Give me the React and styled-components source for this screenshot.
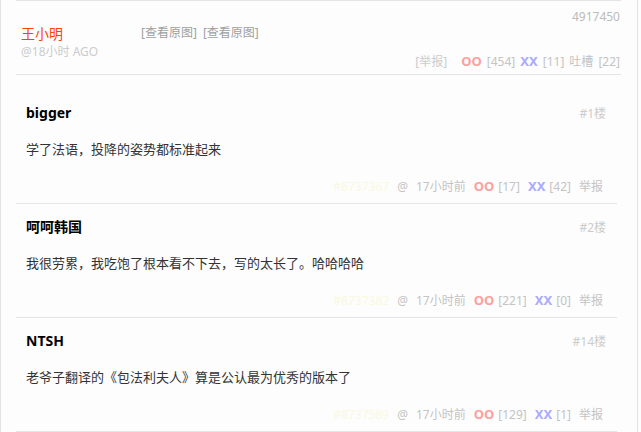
import React from "react";
import styled, { createGlobalStyle } from "styled-components";

const GlobalStyle = createGlobalStyle`
  *, *::before, *::after {
    box-sizing: border-box;
  }
  body {
    margin: 0;
    background: #fdfdfd;
    font-family: "Noto Sans", "Noto Sans CJK SC", sans-serif;
  }
`;

const Page = styled.div`
  width: 638px;
  height: 432px;
  overflow: hidden;
  border-left: 1px solid #e3e3e3;
  border-right: 1px solid #e3e3e3;
  background: #fdfdfd;
`;

const Post = styled.div`
  width: 605px;
  margin-left: 15px;
  padding: 8px 1px 4px 5px;
  border-top: 1px solid #e5e5e5;
  border-bottom: 1px solid #e5e5e5;
  display: grid;
  grid-template-columns: 120px 1fr;
`;

const PostId = styled.div`
  grid-column: 1 / 3;
  text-align: right;
  font-size: 12px;
  line-height: 16px;
  color: #bbb;
`;

const Author = styled.div`
  display: flex;
  flex-direction: column;
`;

const AuthorName = styled.span`
  font-size: 14px;
  line-height: 18px;
  color: #ff4400;
`;

const AuthorTime = styled.span`
  margin-top: 2px;
  font-size: 12px;
  line-height: 14px;
  color: #ccc;
`;

const PostSide = styled.div`
  display: flex;
  flex-direction: column;
`;

const Links = styled.div`
  font-size: 12px;
  line-height: 16px;
  color: #a0a0a0;
  display: flex;
  gap: 6px;
`;

const VoteBar = styled.div`
  margin-top: 12px;
  display: flex;
  justify-content: flex-end;
  align-items: baseline;
  gap: 5px;
  font-size: 12px;
  line-height: 16px;
  color: #c4c4c4;
`;

const Report = styled.span`
  margin-right: 9px;
  color: #ccc;
`;

const Vote = styled.span`
  font-weight: 700;
  font-size: 13px;
  color: ${({ $kind }) => ($kind === "xx" ? "#aaaaff" : "#ff9f9f")};
`;

const Comment = styled.div`
  width: 601px;
  margin-left: 15px;
  padding: 13px 11px 8px 10px;
  border-bottom: 1px solid #e5e5e5;
  &:first-child {
    margin-top: 15px;
  }
`;

const CommentHead = styled.div`
  display: flex;
  justify-content: space-between;
  align-items: baseline;
`;

const Name = styled.span`
  font-size: 14px;
  font-weight: 700;
  line-height: 19px;
  color: #000;
`;

const Floor = styled.span`
  font-size: 12px;
  color: #ccc;
`;

const Text = styled.p`
  margin: 17px 0 0;
  font-size: 13px;
  line-height: 21px;
  color: #333;
`;

const Footer = styled.div`
  margin: 18px 3px 0 0;
  display: flex;
  justify-content: flex-end;
  align-items: baseline;
  gap: 8px;
  font-size: 12px;
  line-height: 16px;
  color: #c4c4c4;
`;

const FooterId = styled.span`
  color: #f9f9e0;
`;

const Pair = styled.span`
  display: inline-flex;
  align-items: baseline;
  gap: 4px;
`;

const comments = [
  { name: "bigger", floor: "#1楼", text: "学了法语，投降的姿势都标准起来", id: "#8737367", oo: 17, xx: 42 },
  { name: "呵呵韩国", floor: "#2楼", text: "我很劳累，我吃饱了根本看不下去，写的太长了。哈哈哈哈", id: "#8737382", oo: 221, xx: 0 },
  { name: "NTSH", floor: "#14楼", text: "老爷子翻译的《包法利夫人》算是公认最为优秀的版本了", id: "#8737589", oo: 129, xx: 1 },
];

export default function App() {
  return (
    <>
      <GlobalStyle />
      <Page>
        <Post>
          <PostId>4917450</PostId>
          <Author>
            <AuthorName>王小明</AuthorName>
            <AuthorTime>@18小时 AGO</AuthorTime>
          </Author>
          <PostSide>
            <Links>
              <span>[查看原图]</span>
              <span>[查看原图]</span>
            </Links>
            <VoteBar>
              <Report>[举报]</Report>
              <Vote>OO</Vote>
              <span>[454]</span>
              <Vote $kind="xx">XX</Vote>
              <span>[11]</span>
              <span>吐槽</span>
              <span>[22]</span>
            </VoteBar>
          </PostSide>
        </Post>
        <div>
          {comments.map((c) => (
            <Comment key={c.id}>
              <CommentHead>
                <Name>{c.name}</Name>
                <Floor>{c.floor}</Floor>
              </CommentHead>
              <Text>{c.text}</Text>
              <Footer>
                <FooterId>{c.id}</FooterId>
                <span>@</span>
                <span>17小时前</span>
                <Pair>
                  <Vote>OO</Vote>
                  <span>[{c.oo}]</span>
                </Pair>
                <Pair>
                  <Vote $kind="xx">XX</Vote>
                  <span>[{c.xx}]</span>
                </Pair>
                <span>举报</span>
              </Footer>
            </Comment>
          ))}
        </div>
      </Page>
    </>
  );
}
